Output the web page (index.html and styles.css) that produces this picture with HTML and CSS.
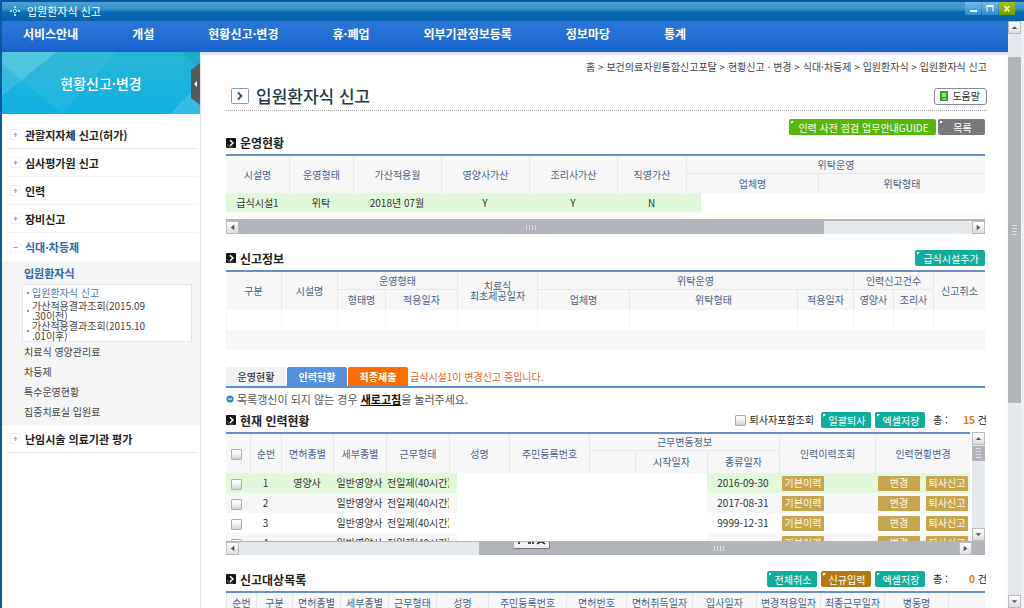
FILE: index.html
```
<!DOCTYPE html>
<html lang="ko">
<head>
<meta charset="utf-8">
<title>입원환자식 신고</title>
<link rel="stylesheet" href="styles.css">
</head>
<body>
<svg class="defs" aria-hidden="true">
  <symbol id="left" viewBox="0 0 12 12"><path d="M8 3v6L4 6z" fill="#555"/></symbol>
  <symbol id="right" viewBox="0 0 12 12"><path d="M4 3v6l4-3z" fill="#555"/></symbol>
  <symbol id="up" viewBox="0 0 12 12"><path d="M3 7.5h6L6 4.5z" fill="#555"/></symbol>
  <symbol id="down" viewBox="0 0 12 12"><path d="M3 4.5h6L6 7.5z" fill="#555"/></symbol>
  <symbol id="bullet" viewBox="0 0 10 10"><rect width="10" height="10" rx="1" fill="#151515"/><path d="M1 6l2 3h4" fill="none" stroke="#666"/><path d="M4 2.2L7 5 4 7.8" fill="none" stroke="#fff" stroke-width="1.5"/></symbol>
</svg>
<div class="window">
  <header class="titlebar">
    <svg class="logo" viewBox="0 0 12 12" aria-hidden="true"><path d="M5 1h2v2H5zM5 4h2v1H5zM5 9h2v2H5zM1 5h2v2H1zM9 5h2v2H9zM5 7h2v1H5zM4 5h1v2H4zM7 5h1v2H7z" fill="#9fe3f5"/></svg>
    <span class="caption">입원환자식 신고</span>
    <div class="controls">
      <button class="ctl" aria-label="최소화"><svg viewBox="0 0 16 13"><path d="M5 9h7" stroke="#fff" stroke-width="2"/></svg></button>
      <button class="ctl" aria-label="최대화"><svg viewBox="0 0 16 13"><path d="M5 9.500V4.500h6v5" fill="none" stroke="#fff"/><path d="M4.500 4h7" stroke="#fff" stroke-width="2"/></svg></button>
      <button class="ctl close" aria-label="닫기"><svg viewBox="0 0 16 13"><path d="M5.500 4l5 5.500M10.500 4l-5 5.500" stroke="#f5f7a0" stroke-width="1.800"/></svg></button>
    </div>
  </header>
  <div class="frame">
    <div class="page">
      <nav class="topnav">
        <a href="#">서비스안내</a><a href="#">개설</a><a href="#">현황신고·변경</a><a href="#">휴·폐업</a><a href="#">외부기관정보등록</a><a href="#">정보마당</a><a href="#">통계</a>
      </nav>
      <div class="columns">
        <aside class="side">
          <div class="banner">
            <svg class="facets" viewBox="0 0 198 62" preserveAspectRatio="none" aria-hidden="true"><path d="M0 0h54L20 28 0 12z" fill="#fff" opacity=".22"/><path d="M0 12L20 28 0 44z" fill="#fff" opacity=".12"/><path d="M20 28L54 0h60L60 62z" fill="#fff" opacity=".06"/><path d="M198 30v32h-30z" fill="#fff" opacity=".15"/><path d="M180 0h18v20z" fill="#0a8a9c" opacity=".2"/></svg>
            <h2>현황신고·변경</h2>
            <button class="fold" aria-label="메뉴 접기"><svg viewBox="0 0 9 42"><path d="M9 0v42L0 35V7z" fill="#55595d"/><path d="M6 18v6l-3-3z" fill="#fff"/></svg></button>
          </div>
          <ul class="menu">
            <li><a href="#"><i>+</i>관할지자체 신고(허가)</a></li>
            <li><a href="#"><i>+</i>심사평가원 신고</a></li>
            <li><a href="#"><i>+</i>인력</a></li>
            <li><a href="#"><i>+</i>장비신고</a></li>
            <li><a href="#" class="on"><i>−</i>식대·차등제</a>
              <div class="sub">
                <a href="#" class="subhead">입원환자식</a>
                <ul class="leaf">
                  <li><a href="#" class="now">입원환자식 신고</a></li>
                  <li><a href="#">가산적용결과조회(2015.09<br>.30이전)</a></li>
                  <li><a href="#">가산적용결과조회(2015.10<br>.01이후)</a></li>
                </ul>
                <a href="#">치료식 영양관리료</a>
                <a href="#">차등제</a>
                <a href="#">특수운영현황</a>
                <a href="#">집중치료실 입원료</a>
              </div>
            </li>
            <li class="last"><a href="#"><i>+</i>난임시술 의료기관 평가</a></li>
          </ul>
        </aside>
        <main class="main">
          <div class="crumbs">홈 &gt; 보건의료자원통합신고포탈 &gt; 현황신고 · 변경 &gt; 식대·차등제 &gt; 입원환자식 &gt; 입원환자식 신고</div>
          <div class="pagehead">
            <svg class="mark" viewBox="0 0 18 16" aria-hidden="true"><rect x=".5" y=".5" width="17" height="15" rx="1" fill="#fff" stroke="#8f98a8"/><path d="M7 4.500L10.500 8 7 11.500" fill="none" stroke="#14557c" stroke-width="1.800"/></svg>
            <h1>입원환자식 신고</h1>
            <button class="help"><svg viewBox="0 0 8 10" aria-hidden="true"><rect width="8" height="10" fill="#3c9b2c"/><path d="M2 2h4v4H2z" fill="#9bdc7c"/><path d="M2 8h4" stroke="#d9f2cc"/></svg>도움말</button>
          </div>
          <div class="actions">
            <button class="btn green">인력 사전 점검 업무안내GUIDE</button>
            <button class="btn gray">목록</button>
          </div>

          <div class="head first"><svg class="bul"><use href="#bullet"/></svg><h3>운영현황</h3></div>
          <div class="grid">
            <table class="tbl t1">
              <colgroup><col class="w63"><col class="w64"><col class="w88"><col class="w88"><col class="w88"><col class="w69"><col class="w132"><col></colgroup>
              <thead>
                <tr><th rowspan="2">시설명</th><th rowspan="2">운영형태</th><th rowspan="2">가산적용월</th><th rowspan="2">영양사가산</th><th rowspan="2">조리사가산</th><th rowspan="2">직영가산</th><th colspan="2">위탁운영</th></tr>
                <tr><th>업체명</th><th>위탁형태</th></tr>
              </thead>
              <tbody><tr class="sel"><td>급식시설1</td><td>위탁</td><td>2018년 07월</td><td>Y</td><td>Y</td><td>N</td><td class="part"></td><td class="void"></td></tr></tbody>
            </table>
            <div class="strip"></div>
            <div class="hbar tall"><button aria-label="왼쪽"><svg><use href="#left"/></svg></button><span class="thumb t-a"></span><span class="rest r-a"></span><button aria-label="오른쪽"><svg><use href="#right"/></svg></button></div>
          </div>

          <div class="head"><svg class="bul"><use href="#bullet"/></svg><h3>신고정보</h3><div class="tools"><button class="btn teal wide">급식시설추가</button></div></div>
          <div class="grid">
            <table class="tbl t2">
              <colgroup><col class="w55"><col class="w56"><col class="w48"><col class="w72"><col class="w80"><col class="w92"><col><col class="w56"><col class="w40"><col class="w40"><col class="w52"></colgroup>
              <thead>
                <tr><th rowspan="2">구분</th><th rowspan="2">시설명</th><th colspan="2">운영형태</th><th rowspan="2">치료식<br>최초제공일자</th><th colspan="3">위탁운영</th><th colspan="2">인력신고건수</th><th rowspan="2">신고취소</th></tr>
                <tr><th>형태명</th><th>적용일자</th><th>업체명</th><th>위탁형태</th><th>적용일자</th><th>영양사</th><th>조리사</th></tr>
              </thead>
              <tbody>
                <tr><td></td><td></td><td></td><td></td><td></td><td></td><td></td><td></td><td></td><td></td><td></td></tr>
                <tr class="alt"><td colspan="11"></td></tr>
              </tbody>
            </table>
          </div>

          <div class="tabs">
            <button class="tab">운영현황</button><button class="tab active">인력현황</button><button class="tab submit">최종제출</button>
            <span class="warn">급식시설1이 변경신고 중입니다.</span>
          </div>
          <p class="note"><svg viewBox="0 0 8 8" aria-hidden="true"><circle cx="4" cy="4" r="3.500" fill="#2389b8"/><path d="M2 4h4" stroke="#bfe9f5" stroke-width="1.500"/></svg>목록갱신이 되지 않는 경우 <a href="#">새로고침</a>을 눌러주세요.</p>

          <div class="head near"><svg class="bul"><use href="#bullet"/></svg><h3>현재 인력현황</h3>
            <div class="tools"><label class="chk"><input type="checkbox">퇴사자포함조회</label><button class="btn teal">일괄퇴사</button><button class="btn teal">엑셀저장</button><span class="sum"><span>총 :</span><span><b>15</b> 건</span></span></div>
          </div>
          <div class="grid">
            <div class="viewport">
              <div class="clip">
                <table class="tbl t3">
                  <colgroup><col class="w24"><col class="w31"><col class="w52"><col class="w53"><col class="w63"><col class="w60"><col class="w80"><col class="w46"><col class="w72"><col class="w72"><col class="w96"><col></colgroup>
                  <thead>
                    <tr><th rowspan="2"><input type="checkbox" aria-label="전체 선택"></th><th rowspan="2">순번</th><th rowspan="2">면허종별</th><th rowspan="2">세부종별</th><th rowspan="2">근무형태</th><th rowspan="2">성명</th><th rowspan="2">주민등록번호</th><th colspan="3">근무변동정보</th><th rowspan="2">인력이력조회</th><th rowspan="2">인력현황변경</th></tr>
                    <tr><th></th><th>시작일자</th><th>종류일자</th></tr>
                  </thead>
                  <tbody>
                    <tr class="sel"><td><input type="checkbox" aria-label="1 선택"></td><td>1</td><td>영양사</td><td>일반영양사</td><td class="cut">전일제(40시간)</td><td class="part"></td><td class="void"></td><td class="void"></td><td class="void"></td><td>2016-09-30</td><td class="lft"><button class="gold">기본이력</button></td><td><div class="pair"><button class="gold">변경</button><button class="gold">퇴사신고</button></div></td></tr>
                    <tr class="alt"><td><input type="checkbox" aria-label="2 선택"></td><td>2</td><td></td><td>일반영양사</td><td class="cut">전일제(40시간)</td><td class="part"></td><td class="void"></td><td class="void"></td><td class="void"></td><td>2017-08-31</td><td class="lft"><button class="gold">기본이력</button></td><td><div class="pair"><button class="gold">변경</button><button class="gold">퇴사신고</button></div></td></tr>
                    <tr><td><input type="checkbox" aria-label="3 선택"></td><td>3</td><td></td><td>일반영양사</td><td class="cut">전일제(40시간)</td><td></td><td></td><td></td><td></td><td>9999-12-31</td><td class="lft"><button class="gold">기본이력</button></td><td><div class="pair"><button class="gold">변경</button><button class="gold">퇴사신고</button></div></td></tr>
                    <tr class="alt"><td><input type="checkbox" aria-label="4 선택"></td><td>4</td><td></td><td>일반영양사</td><td class="cut">전일제(40시간)</td><td class="part"></td><td class="void"></td><td class="void"></td><td class="void"></td><td></td><td class="lft"><button class="gold">기본이력</button></td><td><div class="pair"><button class="gold">변경</button><button class="gold">퇴사신고</button></div></td></tr>
                  </tbody>
                </table>
              </div>
              <div class="vbar"><button aria-label="위로"><svg><use href="#up"/></svg></button><span class="vthumb small"></span><span class="vrest"></span><button aria-label="아래로"><svg><use href="#down"/></svg></button></div>
            </div>
            <div class="hbar"><button aria-label="왼쪽"><svg><use href="#left"/></svg></button><span class="rest r-b"></span><span class="thumb t-b"></span><button aria-label="오른쪽"><svg><use href="#right"/></svg></button><span class="corner"></span>
              <svg class="tip" viewBox="0 0 36 7" aria-hidden="true"><path d="M0 0h36v7H0z" fill="#f2f2f2"/><path d="M0 6.500h35.500V0" fill="none" stroke="#777"/><path d="M4 1h2M14 1h3M19 0v2M23 2l3-2h2l3 2" fill="none" stroke="#111" stroke-width="1.500"/></svg>
            </div>
          </div>

          <div class="head"><svg class="bul"><use href="#bullet"/></svg><h3>신고대상목록</h3>
            <div class="tools"><button class="btn teal">전체취소</button><button class="btn brown">신규입력</button><button class="btn teal">엑셀저장</button><span class="sum"><span>총 :</span><span><b>0</b> 건</span></span></div>
          </div>
          <div class="grid">
            <table class="tbl t4">
              <colgroup><col class="w30"><col class="w36"><col class="w48"><col class="w48"><col class="w48"><col class="w52"><col class="w78"><col class="w60"><col class="w66"><col class="w64"><col class="w64"><col class="w64"><col class="w64"><col></colgroup>
              <thead><tr><th>순번</th><th>구분</th><th>면허종별</th><th>세부종별</th><th>근무형태</th><th>성명</th><th>주민등록번호</th><th>면허번호</th><th>면허취득일자</th><th>입사일자</th><th>변경적용일자</th><th>최종근무일자</th><th>병동명</th><th></th></tr></thead>
            </table>
          </div>
        </main>
      </div>
    </div>
    <div class="vbar pagebar"><button aria-label="위로"><svg><use href="#up"/></svg></button><span class="gap"></span><span class="vthumb big"></span><span class="vrest"></span><button aria-label="아래로"><svg><use href="#down"/></svg></button></div>
  </div>
</div>
</body>
</html>
```

FILE: styles.css
```
* { box-sizing: border-box; }
body {
  margin: 0;
  font: 10px/12px "Noto Sans CJK KR", "Liberation Sans", sans-serif;
  color: #444;
  background: #fff;
}
a { color: inherit; text-decoration: none; }
button { font: inherit; color: inherit; border: 0; padding: 0; margin: 0; white-space: nowrap; }
h1, h2, h3, p, ul { margin: 0; padding: 0; }
ul { list-style: none; }
svg { display: block; flex: none; }
.defs { position: absolute; width: 0; height: 0; }

.window { height: 100vh; overflow: hidden; display: flex; flex-direction: column; border-left: 2px solid #0a5aa0; }

.titlebar {
  flex: none;
  height: 21px;
  display: flex;
  align-items: center;
  padding: 0 9px 0 7px;
  color: #fff;
  background: linear-gradient(#0a56a0 0, #0a56a0 2px, #4ba0d2 2px, #3a92cb 9px, #0a6cb4 12px, #0660a8 100%);
}
.logo { width: 12px; height: 12px; margin-right: 6px; }
.caption { font-size: 11px; line-height: 18px; }
.controls { display: flex; gap: 1px; margin-left: auto; align-self: flex-start; padding-top: 2px; }
.ctl { width: 16px; height: 13px; background: linear-gradient(#6fbbe8, #2f8ed0); }
.ctl.close { background: linear-gradient(#a5bf1c, #6f9c08); }
.ctl svg { width: 16px; height: 13px; }

.frame { flex: 1; min-height: 0; display: flex; padding-right: 3px; background: #eef0f2; }
.page { flex: 1; min-width: 0; display: flex; flex-direction: column; background: #fff; overflow: hidden; }

.topnav {
  flex: none;
  height: 31px;
  display: flex;
  gap: 54px;
  padding: 0 21px;
  font-size: 12px;
  line-height: 26px;
  font-weight: 700;
  color: #fff;
  background: linear-gradient(#2b78d8, #1a63cc);
}

.columns { flex: 1; min-height: 0; display: flex; }

.side { flex: none; width: 199px; border-right: 1px solid #e4e4e6; }
.banner {
  position: relative;
  height: 62px;
  display: flex;
  align-items: center;
  justify-content: center;
  background: linear-gradient(#25b6d4, #10b0e4);
}
.facets { position: absolute; top: 0; left: 0; width: 100%; height: 100%; }
.banner h2 { position: relative; font-size: 14px; line-height: 20px; font-weight: 500; color: #fff; }
.fold { position: absolute; right: 0; top: 11px; background: none; }
.fold svg { width: 9px; height: 42px; }

.menu { padding-top: 7px; }
.menu > li > a {
  display: flex;
  align-items: center;
  height: 28px;
  margin: 0 2px 0 6px;
  padding-left: 2px;
  border-bottom: 1px solid #f4f4f5;
  font-size: 11px;
  font-weight: 700;
  color: #222;
}
.menu > li:first-child > a, .menu > li.last > a { border-bottom-color: #e8e8ea; }
.menu > li > a.on { color: #2f68a8; border-bottom: 0; }
.menu i { width: 11px; height: 11px; margin-right: 4px; font-style: normal; font-weight: 400; font-size: 9px; line-height: 10px; text-align: center; color: #777; border: 1px solid #f3f3f4; }
.sub { background: #f5f5f6; padding: 2px 8px 3px 22px; }
.sub > a { display: block; line-height: 20px; }
.sub > a.subhead { font-size: 11px; font-weight: 700; color: #2f68a8; line-height: 20px; }
.leaf { margin: 1px 0 0 -2px; border: 1px solid #e6e6e8; background: #fff; line-height: 10px; }
.leaf li { display: flex; align-items: center; height: 20px; }
.leaf li:first-child { height: 16px; }
.leaf li::before { content: ""; flex: none; width: 2px; height: 2px; margin: 0 3px 0 4px; background: #999; }
.leaf .now { color: #4a79b5; line-height: 14px; }

.main { flex: 1; min-width: 0; padding: 0 21px 0 25px; box-shadow: inset 0 4px 3px -1px #dcdff0; }
.crumbs { height: 30px; line-height: 30px; text-align: right; white-space: nowrap; }
.pagehead { height: 29px; display: flex; align-items: center; padding-left: 5px; border-bottom: 1px dotted #aaa; }
.mark { width: 18px; height: 16px; margin-right: 7px; }
h1 { font-size: 17px; line-height: 24px; font-weight: 500; color: #1f3a45; }
.help { display: flex; align-items: center; gap: 4px; margin-left: auto; height: 17px; padding: 0 6px 0 5px; background: #fff; border: 1px solid #8c8a98; border-radius: 3px; color: #333; }
.help svg { width: 8px; height: 10px; }

.actions { display: flex; justify-content: flex-end; gap: 2px; padding: 8px 2px 0 0; }
.btn { position: relative; height: 16px; min-width: 50px; padding: 0 4px 0 6px; line-height: 15px; color: #fff; border-radius: 2px; }
.btn::before { content: ""; position: absolute; left: 2px; top: 2px; border: 1px solid transparent; border-top: 2px solid #fff; border-left: 2px solid #fff; border-right-width: 1px; clip-path: polygon(0 0, 100% 0, 0 100%); }
.green { background: #55b80a; min-width: 147px; }
.gray { background: #77787a; min-width: 47px; }
.teal { background: #0fae98; }
.brown { background: #b27a12; }
.wide { min-width: 70px; margin-right: 2px; }

.head { display: flex; align-items: center; height: 16px; margin: 16px 0 4px; }
.head.first { height: 15px; margin-top: 0; }
.head.near { margin-top: 2px; }
.bul { width: 10px; height: 10px; margin-right: 4px; }
h3 { font-size: 12px; line-height: 15px; font-weight: 700; color: #222; }
.tools { display: flex; align-items: center; gap: 4px; margin-left: auto; color: #222; }
.chk { display: flex; align-items: center; gap: 4px; margin-right: 3px; }
.sum { display: flex; justify-content: space-between; width: 58px; padding-left: 4px; }
.sum b { color: #e5760c; }
input[type="checkbox"] { appearance: none; display: block; width: 11px; height: 11px; margin: 0; border: 1px solid #aab0b8; border-radius: 1px; background: linear-gradient(#fafafa 30%, #cfd1d4); }
td input, th input { position: relative; left: 5px; top: 1px; }

.grid { margin-right: 2px; }
.tbl { width: 100%; table-layout: fixed; border-collapse: separate; border-spacing: 0; border-top: 2px solid #6b8fc4; }
.tbl th, .tbl td { padding: 0; overflow: hidden; white-space: nowrap; text-align: center; font-weight: 400; line-height: 10px; }
.tbl th { color: #4a5f85; background: #f7f7f8; border-left: 1px solid #e6e7e9; }
.tbl th:first-child[rowspan] { border-left: 0; }
.tbl tr + tr th:first-child { border-left: 1px solid #e6e7e9; }
.tbl th[colspan] { border-bottom: 1px solid #e6e7e9; }
.tbl td { color: #333; }
.sel td { background: #e2f8da; }
.alt td { background: #f7f7f7; }
.sel .part { background: linear-gradient(to right, #e2f8da 15px, #fff 15px); }
.t3 .part { background: linear-gradient(to right, #e2f8da 8px, #fff 8px); }
.t3 .alt .part { background: linear-gradient(to right, #f7f7f7 8px, #fff 8px); }
.tbl .void { background: #fff; }
.t1 thead tr { height: 18px; }
.t1 thead tr + tr, .t1 tbody tr { height: 19px; }
.t2 thead tr { height: 18px; }
.t2 thead tr + tr, .t2 tbody tr { height: 20px; }
.t2 tbody td { border-left: 1px solid #f5f5f6; }
.t3 thead tr { height: 17px; }
.t3 thead tr + tr { height: 22px; }
.t3 tbody tr { height: 20px; }
.t4 thead tr { height: 20px; }
.t3 .cut { text-align: left; padding-left: 1px; }
.t3 .lft { text-align: left; padding-left: 3px; }
.pair { display: flex; gap: 6px; padding-left: 3px; }
.gold { display: block; width: 42px; height: 15px; line-height: 14px; color: #fffbe8; background: #c6a550; border-radius: 1px; }
.strip { height: 7px; background: #f9fdf6; }

.w24 { width: 24px; } .w30 { width: 30px; } .w31 { width: 31px; } .w36 { width: 36px; }
.w40 { width: 40px; } .w46 { width: 46px; } .w48 { width: 48px; } .w52 { width: 52px; }
.w53 { width: 53px; } .w55 { width: 55px; } .w56 { width: 56px; } .w60 { width: 60px; }
.w63 { width: 63px; } .w64 { width: 64px; } .w66 { width: 66px; } .w69 { width: 69px; }
.w72 { width: 72px; } .w78 { width: 78px; } .w80 { width: 80px; } .w88 { width: 88px; }
.w92 { width: 92px; } .w96 { width: 96px; } .w132 { width: 132px; }

.hbar, .vbar { display: flex; background: #e6e9ec; }
.hbar { position: relative; height: 14px; border-top: 1px solid #b5b6b8; }
.hbar.tall { height: 15px; border-top-width: 2px; }
.vbar { flex: none; flex-direction: column; width: 13px; }
.hbar button, .vbar button { flex: none; width: 13px; height: 13px; border: 1px solid #b9bbbe; background: linear-gradient(#fff, #dcdde0); }
.hbar button svg, .vbar button svg { width: 11px; height: 11px; }
.thumb, .vthumb { display: flex; align-items: center; justify-content: center; background: #b2b4bc; }
.thumb::after { content: ""; width: 11px; height: 5px; background: repeating-linear-gradient(to right, #dfe0e4 0 1px, transparent 1px 3px); }
.vthumb::after { content: ""; width: 5px; height: 11px; background: repeating-linear-gradient(#dfe0e4 0 1px, transparent 1px 3px); }
.t-a { flex: 585; } .r-a { flex: 148; }
.r-b { flex: 240; } .t-b { flex: 480; }
.corner { width: 13px; background: #b2b4bc; }
.tip { position: absolute; left: 38%; top: 0; width: 36px; height: 7px; }
.viewport { display: flex; height: 109px; }
.clip { flex: 1; min-width: 0; margin-right: 2px; overflow: hidden; }
.small { flex: none; height: 15px; margin-top: 1px; }
.vrest { flex: 1; }
.pagebar .gap { height: 23px; }
.big { flex: none; height: 59%; }

.tabs { display: flex; align-items: flex-end; gap: 1px; margin: 17px 2px 0 0; border-bottom: 2px solid #5b8fd6; }
.tab { width: 60px; height: 19px; line-height: 18px; background: #f2f2f2; border-radius: 2px 2px 0 0; color: #333; font-weight: 500; }
.tab.active { background: #5490dc; color: #fff; font-weight: 700; }
.tab.submit { background: #f96e05; color: #fff; font-weight: 700; }
.warn { align-self: center; padding-left: 1px; color: #e2632a; }
.note { display: flex; align-items: center; height: 22px; font-size: 11px; color: #555; white-space: pre; }
.note svg { width: 8px; height: 8px; margin-right: 3px; }
.note a { font-weight: 700; color: #111; text-decoration: underline; }
```
